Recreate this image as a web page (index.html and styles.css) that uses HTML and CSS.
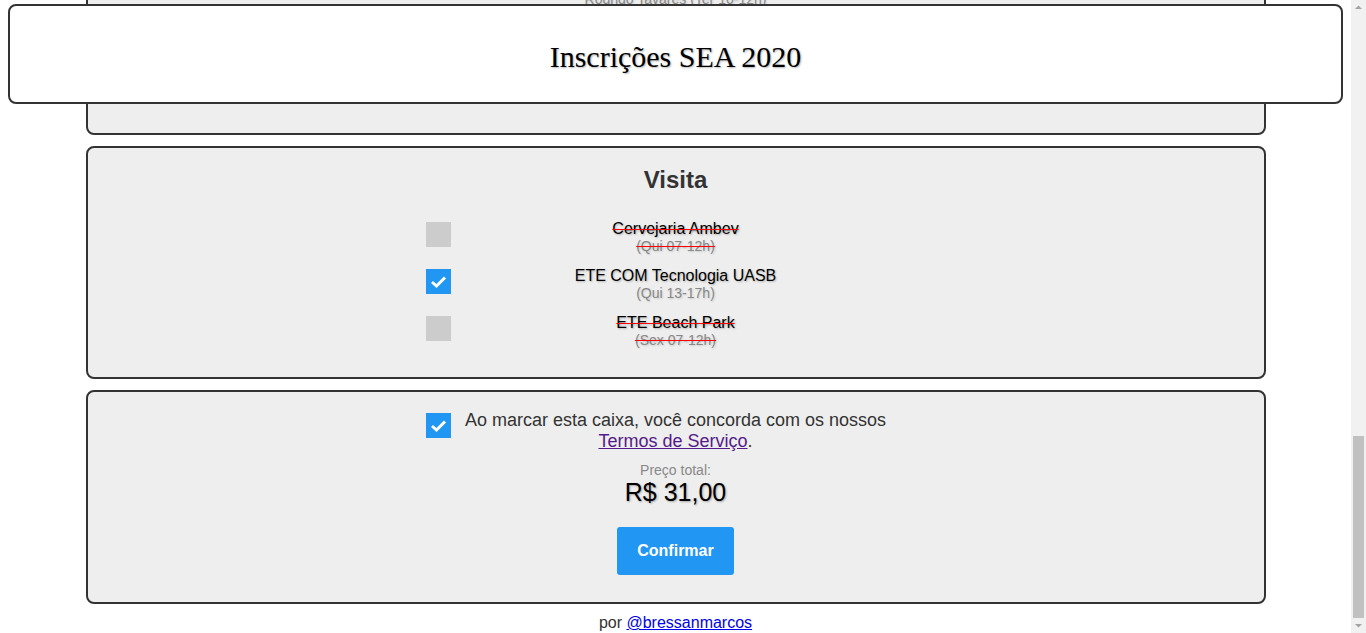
FILE: index.html
```html
<!DOCTYPE html>
<html lang="pt-BR">
<head>
<meta charset="utf-8">
<title>Inscrições SEA 2020</title>
<link rel="stylesheet" href="styles.css">
</head>
<body>
<header class="topbar">
  <h1 class="topbar-title">Inscrições SEA 2020</h1>
</header>

<div class="viewport" id="viewport">
<main class="page">
  <section class="card">
    <h2 class="card-title">Dados pessoais</h2>
    <div class="fields">
      <label class="field"><span class="field-label">Nome completo</span><input class="field-input" type="text" value="Marcos Bressan"></label>
      <label class="field"><span class="field-label">E-mail</span><input class="field-input" type="text" value="marcos@example.com"></label>
      <label class="field"><span class="field-label">Matrícula</span><input class="field-input" type="text" value="2016001234"></label>
      <label class="field"><span class="field-label">Curso</span><input class="field-input" type="text" value="Engenharia Ambiental"></label>
    </div>
  </section>

  <section class="card">
    <h2 class="card-title">Minicursos</h2>
    <div class="options">
      <div class="option"><span class="box checked"><svg viewBox="0 0 25 25" class="tick"><polyline points="6,13 10.5,17 19,8.5"/></svg></span><span class="option-text"><span class="option-name">Introdução ao QGIS</span><span class="option-sub">(Seg 08-12h)</span></span></div>
      <div class="option"><span class="box"></span><span class="option-text"><span class="option-name">Python para Engenharia</span><span class="option-sub">(Seg 13-17h)</span></span></div>
      <div class="option full"><span class="box"></span><span class="option-text"><span class="option-name">Modelagem Hidrológica</span><span class="option-sub">(Ter 08-12h)</span></span></div>
      <div class="option"><span class="box"></span><span class="option-text"><span class="option-name">AutoCAD Básico</span><span class="option-sub">(Ter 13-17h)</span></span></div>
      <div class="option"><span class="box"></span><span class="option-text"><span class="option-name">Licenciamento Ambiental</span><span class="option-sub">(Qua 08-12h)</span></span></div>
      <div class="option full"><span class="box"></span><span class="option-text"><span class="option-name">Energia Solar Fotovoltaica</span><span class="option-sub">(Qua 13-17h)</span></span></div>
    </div>
  </section>

  <section class="card card-tall">
    <h2 class="card-title">Palestras</h2>
    <div class="options options-wide">
      <div class="option"><span class="box"></span><span class="option-text"><span class="option-name">Abertura: Desafios da Engenharia Ambiental</span><span class="option-sub">Comissão Organizadora (Seg 19-21h)</span></span></div>
      <div class="option"><span class="box"></span><span class="option-text"><span class="option-name">Gestão de Resíduos Sólidos Urbanos</span><span class="option-sub">Ana Paula Lima (Seg 21-22h)</span></span></div>
      <div class="option full"><span class="box"></span><span class="option-text"><span class="option-name">Economia Circular na Indústria</span><span class="option-sub">Carlos Menezes (Ter 08-10h)</span></span></div>
      <div class="option"><span class="box"></span><span class="option-text"><span class="option-name">Saneamento Básico no Nordeste</span><span class="option-sub">Fernanda Souza (Ter 14-16h)</span></span></div>
      <div class="option"><span class="box"></span><span class="option-text"><span class="option-name">Recuperação de Áreas Degradadas</span><span class="option-sub">João Batista (Ter 16-18h)</span></span></div>
      <div class="option"><span class="box"></span><span class="option-text"><span class="option-name">Mudanças Climáticas e Cidades</span><span class="option-sub">Luciana Araújo (Qua 08-10h)</span></span></div>
      <div class="option"><span class="box"></span><span class="option-text"><span class="option-name">Reúso de Água na Agricultura</span><span class="option-sub">Paulo Henrique (Qua 10-12h)</span></span></div>
      <div class="option full"><span class="box"></span><span class="option-text"><span class="option-name">Qualidade do Ar em Grandes Centros</span><span class="option-sub">Mariana Costa (Qua 14-16h)</span></span></div>
      <div class="option"><span class="box"></span><span class="option-text"><span class="option-name">Carreira em Consultoria Ambiental</span><span class="option-sub">Ricardo Alves (Qui 19-21h)</span></span></div>
      <div class="option"><span class="box"></span><span class="option-text"><span class="option-name">Tratamento de Efluentes Industriais</span><span class="option-sub">Beatriz Nunes (Sex 14-16h)</span></span></div>
      <div class="option"><span class="box"></span><span class="option-text"><span class="option-name">Drenagem Urbana Sustentável</span><span class="option-sub">Rodrigo Tavares (Ter 10-12h)</span></span></div>
    </div>
  </section>

  <section class="card">
    <h2 class="card-title">Visita</h2>
    <div class="options">
      <div class="option full"><span class="box"></span><span class="option-text"><span class="option-name">Cervejaria Ambev</span><span class="option-sub">(Qui 07-12h)</span></span></div>
      <div class="option"><span class="box checked"><svg viewBox="0 0 25 25" class="tick"><polyline points="6,13 10.5,17 19,8.5"/></svg></span><span class="option-text"><span class="option-name">ETE COM Tecnologia UASB</span><span class="option-sub">(Qui 13-17h)</span></span></div>
      <div class="option full"><span class="box"></span><span class="option-text"><span class="option-name">ETE Beach Park</span><span class="option-sub">(Sex 07-12h)</span></span></div>
    </div>
  </section>

  <section class="card card-confirm">
    <div class="terms">
      <span class="box box-terms checked"><svg viewBox="0 0 25 25" class="tick"><polyline points="6,13 10.5,17 19,8.5"/></svg></span>
      <span class="terms-text">Ao marcar esta caixa, você concorda com os nossos <a class="terms-link" href="#">Termos de Serviço</a>.</span>
    </div>
    <div class="price-label">Preço total:</div>
    <div class="price">R$ 31,00</div>
    <button class="confirm" type="button">Confirmar</button>
  </section>

  <footer class="credits">por <a class="credits-link" href="#">@bressanmarcos</a></footer>
</main>
</div>

<aside class="scrollbar" aria-hidden="true">
  <svg class="scroll-arrow" viewBox="0 0 15 15"><polygon points="4,9 11,9 7.5,5.5"/></svg>
  <div class="scroll-track"><div class="scroll-thumb"></div></div>
  <svg class="scroll-arrow" viewBox="0 0 15 15"><polygon points="4,6 11,6 7.5,9.5"/></svg>
</aside>
<script src="script.js"></script>
</body>
</html>
```

FILE: styles.css
```css
html,
body {
  height: 100%;
}

body {
  margin: 0;
  display: flex;
  overflow: hidden;
  background: #ffffff;
  font-family: "Liberation Sans", Arial, sans-serif;
  color: #333333;
}

.viewport {
  flex: 1 1 auto;
  height: 100%;
  overflow: hidden;
}

.scrollbar {
  flex: 0 0 15px;
  width: 15px;
  height: 100%;
  background: #f1f1f1;
  display: flex;
  flex-direction: column;
}

.scroll-arrow {
  flex: 0 0 15px;
  width: 15px;
  height: 15px;
  fill: #a3a3a3;
}

.scroll-track {
  flex: 1 1 auto;
  display: flex;
  flex-direction: column;
  justify-content: flex-end;
  padding: 0 2px;
}

.scroll-thumb {
  height: 182px;
  background: #c1c1c1;
}

.topbar {
  position: fixed;
  top: 4px;
  left: 8px;
  right: 23px;
  z-index: 10;
  background: #ffffff;
  border: 2px solid #333333;
  border-radius: 8px;
  padding: 34px 0 28px;
  text-align: center;
}

.topbar-title {
  margin: 0;
  font-family: "Liberation Serif", "Times New Roman", serif;
  font-size: 30px;
  font-weight: normal;
  line-height: 34px;
  color: #000000;
  text-shadow: 1px 1px 2px rgba(0, 0, 0, 0.3);
}

.page {
  padding-top: 116px;
  display: flex;
  flex-direction: column;
  align-items: center;
}

.card {
  box-sizing: border-box;
  width: 1180px;
  margin: 0 0 11px;
  padding: 0 16px 16px;
  background: #eeeeee;
  border: 2px solid #333333;
  border-radius: 8px;
  display: flex;
  flex-direction: column;
  align-items: center;
}

.card-tall {
  padding-bottom: 113px;
}

.card-title {
  margin: 18px 0 26px;
  font-size: 24px;
  line-height: 28px;
  font-weight: bold;
  color: #333333;
}

.fields {
  width: 500px;
  display: flex;
  flex-direction: column;
  gap: 12px;
  margin-bottom: 8px;
}

.field {
  display: flex;
  flex-direction: column;
  gap: 4px;
  font-size: 16px;
}

.field-input {
  font: 16px "Liberation Sans", Arial, sans-serif;
  padding: 8px 10px;
  border: 1px solid #bbbbbb;
  border-radius: 4px;
  background: #ffffff;
}

.options {
  width: 500px;
  display: flex;
  flex-direction: column;
}

.options-wide {
  width: 716px;
}

.option {
  display: flex;
  align-items: flex-start;
  margin-bottom: 13px;
}

.option::after {
  content: "";
  flex: 0 0 25px;
}

.box {
  flex: 0 0 25px;
  width: 25px;
  height: 25px;
  margin-top: 2px;
  background: #cccccc;
  display: flex;
}

.box.checked {
  background: #2196f3;
}

.tick {
  width: 25px;
  height: 25px;
  fill: none;
  stroke: #ffffff;
  stroke-width: 3;
  stroke-linecap: butt;
  stroke-linejoin: miter;
}

.option-text {
  flex: 1 1 auto;
  display: flex;
  flex-direction: column;
  align-items: center;
  text-align: center;
}

.option-name {
  font-size: 16px;
  line-height: 18px;
  color: #000000;
  text-shadow: 1px 1px 2px rgba(0, 0, 0, 0.25);
}

.option-sub {
  font-size: 14px;
  line-height: 16px;
  color: #888888;
  text-shadow: 1px 1px 2px rgba(0, 0, 0, 0.15);
}

.option.full .option-name,
.option.full .option-sub {
  text-decoration: line-through;
  text-decoration-color: #ff0000;
}

.card-confirm {
  padding: 18px 16px 27px;
}

.terms {
  width: 500px;
  display: flex;
  align-items: flex-start;
}

.terms::after {
  content: "";
  flex: 0 0 25px;
}

.box-terms {
  margin-top: 3px;
}

.terms-text {
  flex: 1 1 auto;
  text-align: center;
  font-size: 18px;
  line-height: 21px;
  color: #333333;
}

.terms-link {
  color: #551a8b;
}

.price-label {
  margin-top: 10px;
  font-size: 14px;
  line-height: 16px;
  color: #888888;
}

.price {
  font-size: 25px;
  line-height: 28px;
  color: #000000;
  text-shadow: 1px 1px 2px rgba(0, 0, 0, 0.3);
}

.confirm {
  margin-top: 21px;
  padding: 15px 20px;
  border: none;
  border-radius: 3px;
  background: #2196f3;
  color: #ffffff;
  font: bold 16px/18px "Liberation Sans", Arial, sans-serif;
  cursor: pointer;
}

.credits {
  margin: -2px 0 0;
  padding: 0 0 1px;
  font-size: 16px;
  line-height: 19px;
  color: #333333;
  text-align: center;
}

.credits-link {
  color: #0000ee;
}
```

FILE: script.js
```js
function scrollToBottom() {
  var vp = document.getElementById('viewport');
  vp.scrollTop = vp.scrollHeight;
}
scrollToBottom();
window.addEventListener('load', scrollToBottom);
```
